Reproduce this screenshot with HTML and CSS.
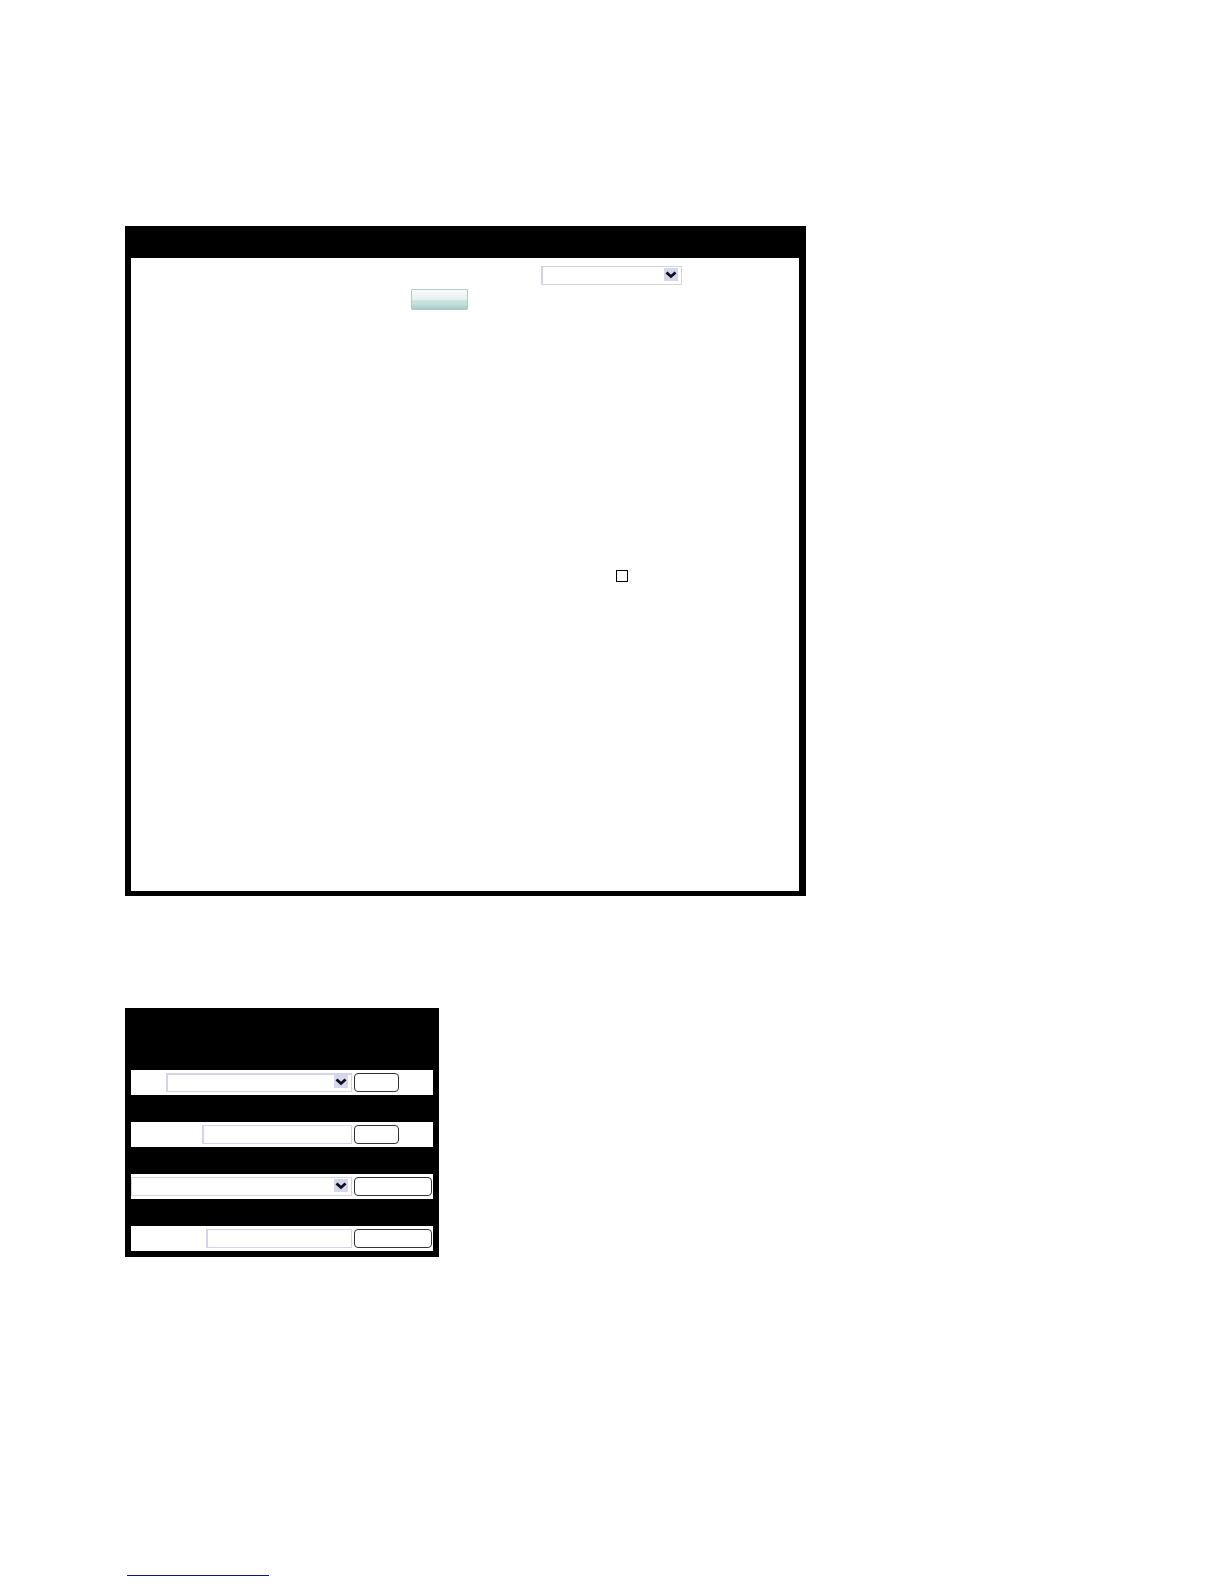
FILE: index.html
```html
<!DOCTYPE html>
<html lang="en">
<head>
<meta charset="UTF-8">
<meta name="viewport" content="width=device-width, initial-scale=1.0">
<title>Search</title>
<link rel="stylesheet" href="styles.css">
</head>
<body>
    <main class="page">
        <form class="panel settings">
            <div class="settings-body">
                <div class="line line-select">
                    <span class="select-box">
                        <select class="field" aria-label="Option"></select>
                        <svg class="arrow" viewBox="0 0 14 13" aria-hidden="true"><rect width="14" height="13"/><path d="M2.5 4.5 L7 8.5 L11.5 4.5"/></svg>
                    </span>
                </div>
                <div class="line line-button">
                    <button type="button" class="apply" aria-label="Apply"></button>
                </div>
                <div class="line line-check">
                    <input type="checkbox" class="check" aria-label="Enable">
                </div>
            </div>
        </form>

        <form class="panel search">
            <div class="row">
                <span class="select-box medium">
                    <select class="field" aria-label="List"></select>
                    <svg class="arrow" viewBox="0 0 14 13" aria-hidden="true"><rect width="14" height="13"/><path d="M2.5 4.5 L7 8.5 L11.5 4.5"/></svg>
                </span>
                <button type="button" class="go short" aria-label="Go to list"></button>
            </div>
            <div class="row">
                <input type="text" class="field text" aria-label="Name">
                <button type="button" class="go short" aria-label="Go to name"></button>
            </div>
            <div class="row">
                <span class="select-box full">
                    <select class="field" aria-label="Category"></select>
                    <svg class="arrow" viewBox="0 0 14 13" aria-hidden="true"><rect width="14" height="13"/><path d="M2.5 4.5 L7 8.5 L11.5 4.5"/></svg>
                </span>
                <button type="button" class="go" aria-label="Search category"></button>
            </div>
            <div class="row">
                <input type="text" class="field text narrow" aria-label="Keyword">
                <button type="button" class="go" aria-label="Search keyword"></button>
            </div>
        </form>

        <a href="#" class="foot-link" aria-label="Home"></a>
    </main>
</body>
</html>
```

FILE: styles.css
```css
*{
    box-sizing: border-box;
}
body{
    margin: 0;
    background: #fff;
    font-family: "Liberation Sans", Arial, sans-serif;
    font-size: 12px;
}
.page{
    padding: 226px 125px 8px;
}
.panel{
    background: #000;
}

/* settings panel */
.settings{
    max-width: 681px;
    padding: 32px 7px 5px 6px;
}
.settings-body{
    min-height: 633px;
    padding-top: 8px;
    background: #fff;
}
.line{
    display: flex;
}
.line-select{
    justify-content: flex-end;
    padding-right: 117px;
}
.line-select .select-box{
    width: 141px;
}
.line-button{
    margin-top: 4px;
    padding-left: 280px;
}
.line-check{
    justify-content: flex-end;
    margin-top: 260px;
    padding-right: 171px;
}

/* controls */
.select-box{
    display: block;
    position: relative;
}
.field{
    display: block;
    appearance: none;
    width: 100%;
    height: 19px;
    margin: 0;
    padding: 0 4px;
    border: 1px solid #d3d3de;
    border-left-width: 2px;
    border-radius: 0;
    background: #fff;
    font: inherit;
}
.arrow{
    position: absolute;
    top: 2px;
    right: 4px;
    width: 14px;
    height: 13px;
    pointer-events: none;
}
.arrow rect{
    fill: #d5d7ea;
}
.arrow path{
    fill: none;
    stroke: #0c0c1c;
    stroke-width: 2.8;
}
.apply{
    width: 57px;
    height: 21px;
    padding: 0;
    border: 1px solid #b9c6c4;
    border-radius: 1px;
    background: linear-gradient(#f8fbfa 0%, #e3f0ee 50%, #c3dfda 60%, #c9e3df 68%, #a3cec7 100%);
}
.check{
    appearance: none;
    width: 12px;
    height: 12px;
    margin: 0;
    border: 1px solid #000;
    background: #fff;
}
.check:checked{
    background: #000;
}

/* search panel */
.search{
    display: flex;
    flex-direction: column;
    gap: 27px;
    max-width: 314px;
    margin-top: 112px;
    padding: 62px 6px 6px;
}
.row{
    display: grid;
    grid-template-columns: 1fr 78px;
    column-gap: 2px;
    align-items: center;
    padding-right: 1px;
    height: 25px;
    background: #fff;
}
.search .field{
    border-color: #d3d4ea;
}
.search .medium .field{
    border-top-width: 2px;
}
.search .full .field{
    border-color: #d0d6dc;
    border-left-width: 1px;
}
.medium,
.text{
    justify-self: end;
}
.medium{
    width: 84%;
}
.text{
    width: 68%;
}
.narrow{
    width: 66%;
}
.go{
    width: 100%;
    height: 19px;
    padding: 0;
    border: 1px solid #333;
    border-radius: 4px;
    background: #fff;
}
.short{
    width: 45px;
}

.foot-link{
    display: block;
    width: 142px;
    margin: 318px 0 0 2px;
    border-bottom: 1px solid #12128c;
}
```
